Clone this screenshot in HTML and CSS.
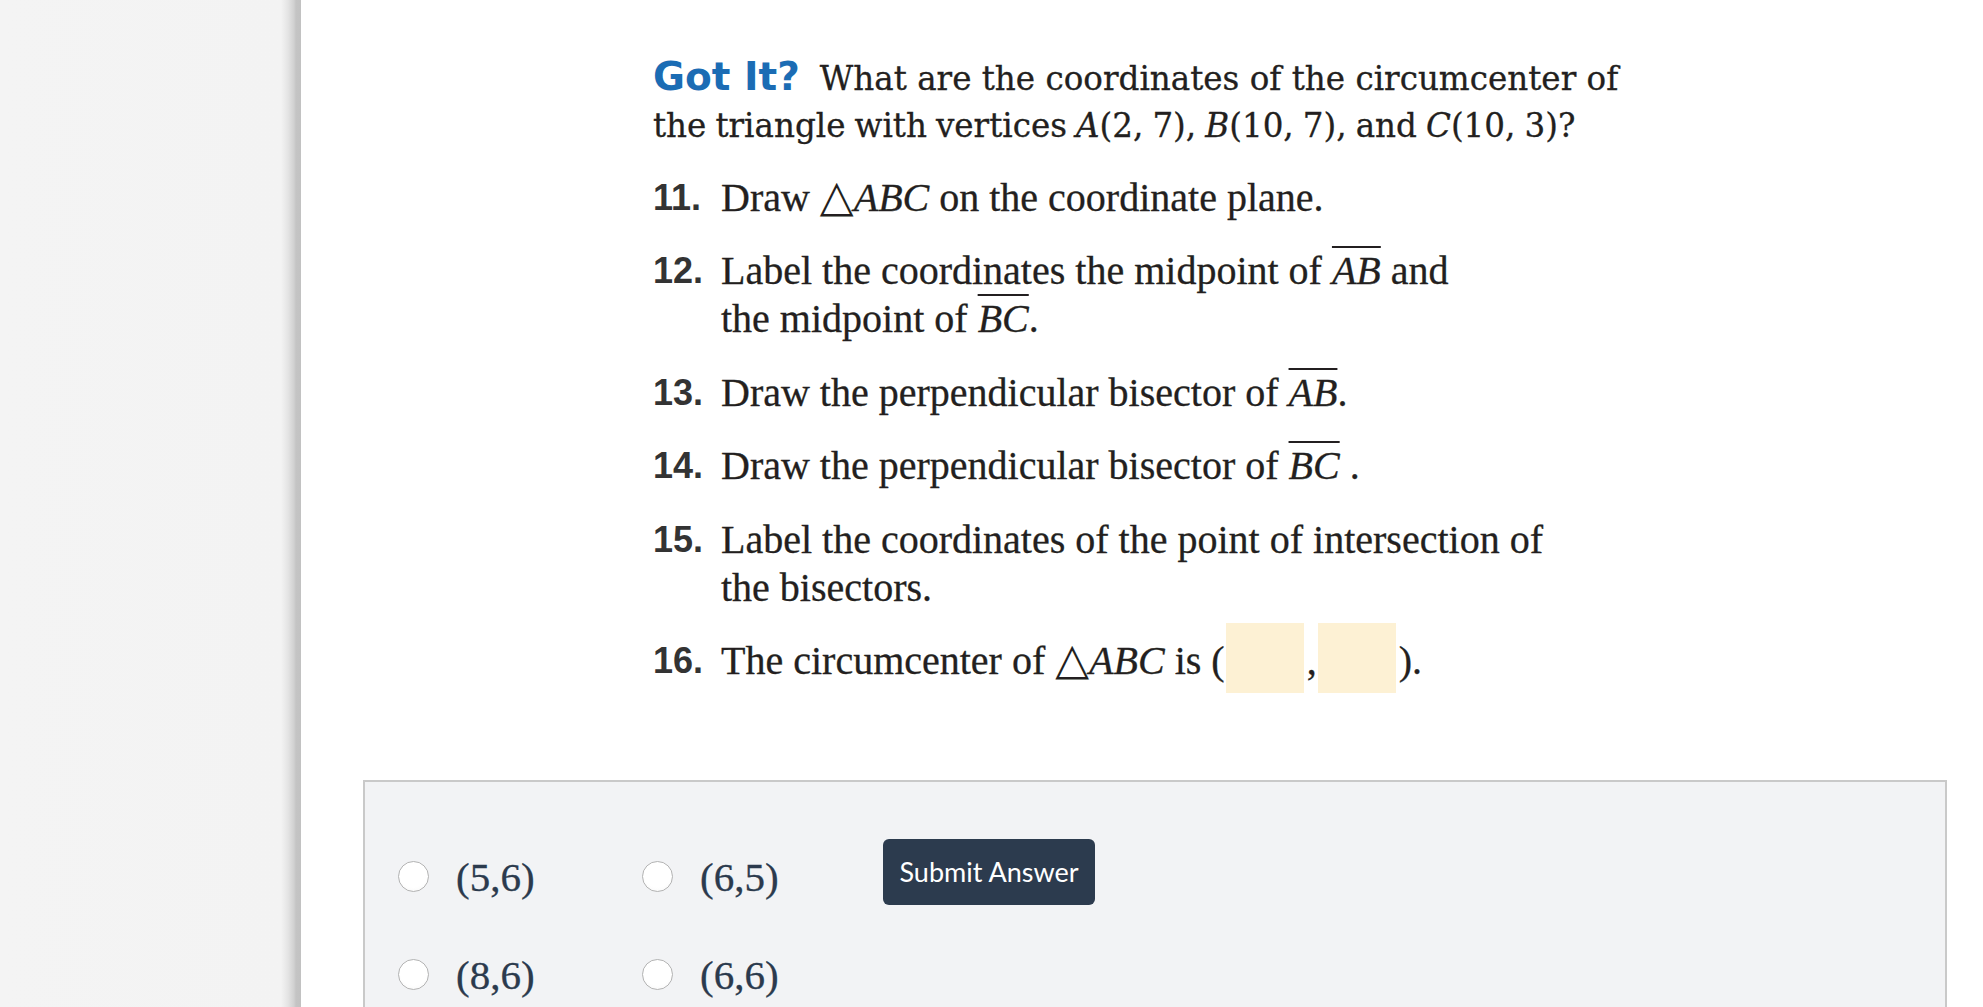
FILE: index.html
```html
<!DOCTYPE html>
<html lang="en">
<head>
<meta charset="utf-8">
<title>Got It? Circumcenter</title>
<link rel="stylesheet" href="styles.css">
</head>
<body>
<div class="page">
  <aside class="sidebar"></aside>
  <main class="main">
    <section class="problem">
      <p class="prompt"><span class="gotit">Got It?</span>What are the coordinates of the circumcenter of<br><span class="tight">the triangle with vertices <i>A</i>(2, 7), <i>B</i>(10, 7), and <i>C</i>(10, 3)?</span></p>
      <ol class="steps">
        <li class="step"><span class="num">11.</span><span class="text">Draw <span class="tri">△</span><i>ABC</i> on the coordinate plane.</span></li>
        <li class="step"><span class="num">12.</span><span class="text">Label the coordinates the midpoint of <i class="seg">AB</i> and<br>the midpoint of <i class="seg">BC</i>.</span></li>
        <li class="step"><span class="num">13.</span><span class="text">Draw the perpendicular bisector of <i class="seg">AB</i>.</span></li>
        <li class="step"><span class="num">14.</span><span class="text">Draw the perpendicular bisector of <i class="seg">BC</i> .</span></li>
        <li class="step"><span class="num">15.</span><span class="text">Label the coordinates of the point of intersection of<br>the bisectors.</span></li>
        <li class="step"><span class="num">16.</span><span class="text">The circumcenter of <span class="tri">△</span><i>ABC</i> is (<span class="blank"></span>,<span class="blank"></span>).</span></li>
      </ol>
    </section>
    <form class="answer">
      <div class="choices">
        <label class="choice"><input class="radio" type="radio" name="ans"><span class="choice-text">(5,6)</span></label>
        <label class="choice"><input class="radio" type="radio" name="ans"><span class="choice-text">(6,5)</span></label>
        <button class="submit" type="button">Submit Answer</button>
        <label class="choice"><input class="radio" type="radio" name="ans"><span class="choice-text">(8,6)</span></label>
        <label class="choice"><input class="radio" type="radio" name="ans"><span class="choice-text">(6,6)</span></label>
      </div>
    </form>
  </main>
</div>
</body>
</html>
```

FILE: styles.css
```css
html, body {
  margin: 0;
  padding: 0;
  height: 100%;
  overflow: hidden;
}

.page {
  display: flex;
  height: 100vh;
}

.sidebar {
  flex: 0 0 301px;
  background: linear-gradient(to right, #f4f4f4 0, #f3f3f3 281px, #e4e4e4 288px, #d0d0d0 294px, #c4c4c4 296px, #c2c2c2 301px);
}

.main {
  flex: 1;
  background: #ffffff;
  padding-top: 56px;
}

.problem {
  padding-left: 352px;
  color: #231f20;
  -webkit-text-stroke: 0.3px #231f20;
}

.prompt {
  margin: 0 0 24px 0;
  font-family: "DejaVu Serif", "Liberation Serif", serif;
  font-size: 32.6px;
  line-height: 47px;
}

.tight {
  word-spacing: -1.3px;
}

.gotit {
  font-family: "DejaVu Sans", "Liberation Sans", sans-serif;
  font-weight: bold;
  font-size: 39px;
  line-height: 1;
  color: #1b6cb4;
  -webkit-text-stroke: 0;
  margin-right: 20px;
}

.steps {
  list-style: none;
  margin: 0;
  padding: 0;
}

.step {
  display: flex;
  margin-top: 25.4px;
  font-family: "Liberation Serif", serif;
  font-size: 40px;
  line-height: 48px;
}

.step:first-child {
  margin-top: 0;
}

.num {
  flex: 0 0 68px;
  font-family: "Liberation Sans", "DejaVu Sans", sans-serif;
  font-weight: bold;
  font-size: 36px;
  color: #333333;
  -webkit-text-stroke: 0;
}

.text {
  display: block;
}

.tri {
  font-family: "DejaVu Sans", sans-serif;
  font-size: 44px;
  line-height: 0;
  -webkit-text-stroke: 0;
}

.seg {
  text-decoration: overline;
  text-decoration-thickness: 2px;
}

.blank {
  display: inline-block;
  width: 78px;
  height: 70px;
  background: #fdf1d4;
  vertical-align: -10px;
  margin: -14px 3px -9px 1px;
}

.answer {
  margin: 95px 36px 0 62px;
  border: 2px solid #c9c9c9;
  background: #f2f3f5;
  padding: 57px 33px 40px 33px;
}

.choices {
  display: grid;
  grid-template-columns: 244px 244px auto;
  grid-template-rows: 76px 76px;
  row-gap: 22px;
  align-items: center;
}

.choice {
  display: flex;
  align-items: center;
  gap: 27px;
}

.radio {
  appearance: none;
  -webkit-appearance: none;
  margin: 0;
  width: 31px;
  height: 31px;
  border-radius: 50%;
  border: 1px solid #b3b3b3;
  background: radial-gradient(circle at 50% 40%, #ffffff 60%, #f4f4f4 100%);
  box-sizing: border-box;
}

.choice-text {
  font-family: "Liberation Serif", serif;
  font-size: 41px;
  line-height: 48px;
  color: #2b3a4d;
  -webkit-text-stroke: 0.3px #2b3a4d;
}

.submit {
  align-self: start;
  justify-self: start;
  margin-left: -3px;
  width: 212px;
  height: 66px;
  border: none;
  border-radius: 6px;
  background: #2c3b4e;
  color: #ffffff;
  font-family: Lato, "Open Sans", sans-serif;
  font-size: 27px;
  padding: 0;
}
```
